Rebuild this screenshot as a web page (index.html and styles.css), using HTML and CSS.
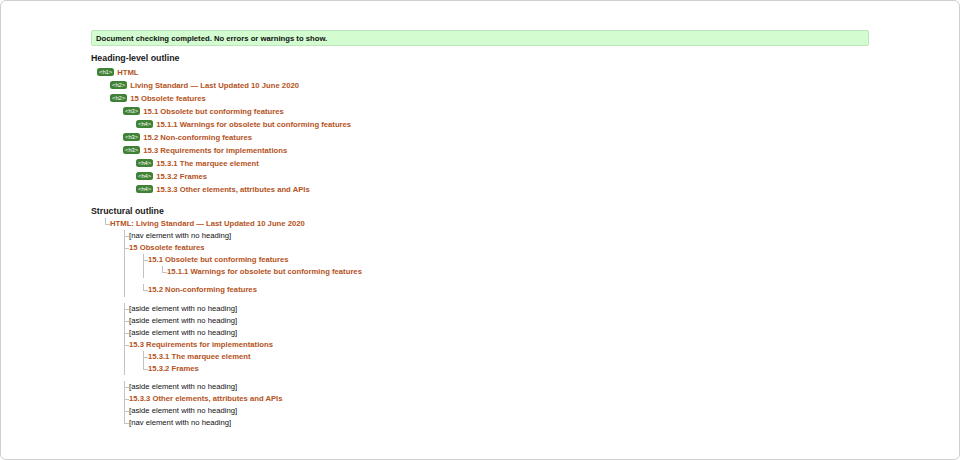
FILE: index.html
```html
<!DOCTYPE html>
<html lang="en">
<head>
    <meta charset="UTF-8">
    <meta name="viewport" content="width=device-width, initial-scale=1.0">
    <title>Nu Html Checker - Outline</title>
    <link rel="stylesheet" href="styles.css">
</head>
<body>
    <div class="frame">
        <div class="content">
            <p class="success">Document checking completed. No errors or warnings to show.</p>

            <section class="outline">
                <h2>Heading-level outline</h2>
                <ol class="headings">
                    <li class="lvl1"><span class="tag">&lt;h1&gt;</span><span class="title">HTML</span></li>
                    <li class="lvl2"><span class="tag">&lt;h2&gt;</span><span class="title">Living Standard — Last Updated 10 June 2020</span></li>
                    <li class="lvl2"><span class="tag">&lt;h2&gt;</span><span class="title">15 Obsolete features</span></li>
                    <li class="lvl3"><span class="tag">&lt;h3&gt;</span><span class="title">15.1 Obsolete but conforming features</span></li>
                    <li class="lvl4"><span class="tag">&lt;h4&gt;</span><span class="title">15.1.1 Warnings for obsolete but conforming features</span></li>
                    <li class="lvl3"><span class="tag">&lt;h3&gt;</span><span class="title">15.2 Non-conforming features</span></li>
                    <li class="lvl3"><span class="tag">&lt;h3&gt;</span><span class="title">15.3 Requirements for implementations</span></li>
                    <li class="lvl4"><span class="tag">&lt;h4&gt;</span><span class="title">15.3.1 The marquee element</span></li>
                    <li class="lvl4"><span class="tag">&lt;h4&gt;</span><span class="title">15.3.2 Frames</span></li>
                    <li class="lvl4"><span class="tag">&lt;h4&gt;</span><span class="title">15.3.3 Other elements, attributes and APIs</span></li>
                </ol>
            </section>

            <section class="outline">
                <h2>Structural outline</h2>
                <ol class="tree">
                    <li><span class="title">HTML: Living Standard — Last Updated 10 June 2020</span>
                        <ol>
                            <li><span class="empty">[nav element with no heading]</span></li>
                            <li><span class="title">15 Obsolete features</span>
                                <ol>
                                    <li><span class="title">15.1 Obsolete but conforming features</span>
                                        <ol>
                                            <li><span class="title">15.1.1 Warnings for obsolete but conforming features</span></li>
                                        </ol>
                                    </li>
                                    <li><span class="title">15.2 Non-conforming features</span></li>
                                </ol>
                            </li>
                            <li><span class="empty">[aside element with no heading]</span></li>
                            <li><span class="empty">[aside element with no heading]</span></li>
                            <li><span class="empty">[aside element with no heading]</span></li>
                            <li><span class="title">15.3 Requirements for implementations</span>
                                <ol>
                                    <li><span class="title">15.3.1 The marquee element</span></li>
                                    <li><span class="title">15.3.2 Frames</span></li>
                                </ol>
                            </li>
                            <li><span class="empty">[aside element with no heading]</span></li>
                            <li><span class="title">15.3.3 Other elements, attributes and APIs</span></li>
                            <li><span class="empty">[aside element with no heading]</span></li>
                            <li><span class="empty">[nav element with no heading]</span></li>
                        </ol>
                    </li>
                </ol>
            </section>
        </div>
    </div>
</body>
</html>
```

FILE: styles.css
```css
:root {
    --frame-border: #cfcfcf;
    --ok-bg: #d3fcd0;
    --ok-border: #bde6b9;
    --heading: #1a1a1a;
    --link: #b4531c;
    --tag-bg: #3f8235;
    --line: #c2c2c2;
}

* {
    margin: 0;
    padding: 0;
    box-sizing: border-box;
}

body {
    font-family: "Liberation Sans", Arial, sans-serif;
    background-color: #fff;
    color: #111;
}

.frame {
    height: 460px;
    border: 1px solid var(--frame-border);
    border-radius: 6px;
}

.content {
    max-width: 778px;
    margin: 0 auto;
    padding-top: 29px;
}

.success {
    background-color: var(--ok-bg);
    border: 1px solid var(--ok-border);
    border-radius: 2px;
    padding: 1px 4px 0;
    font-size: 7.7px;
    line-height: 13px;
    font-weight: 700;
    margin-bottom: 7px;
}

.outline h2 {
    font-size: 8.8px;
    line-height: 11px;
    font-weight: 700;
    color: var(--heading);
}

ol {
    list-style: none;
}

.title {
    color: var(--link);
    font-weight: 700;
}

.empty {
    color: #111;
}

/* heading-level outline */

.headings {
    margin: 2px 0 10px;
    font-size: 7.7px;
}

.headings li {
    line-height: 13px;
    height: 13px;
}

.headings .lvl1 { padding-left: 6px; }
.headings .lvl2 { padding-left: 19px; }
.headings .lvl3 { padding-left: 32px; }
.headings .lvl4 { padding-left: 45px; }

.tag {
    display: inline-block;
    vertical-align: middle;
    margin-top: -1px;
    margin-right: 3px;
    padding: 0 2px;
    height: 8px;
    line-height: 8px;
    font-size: 5.8px;
    color: #fff;
    background-color: var(--tag-bg);
    border-radius: 2.5px;
}

/* structural outline */

.tree {
    margin-top: 1px;
    padding-left: 14px;
    font-size: 7.7px;
    line-height: 12.1px;
}

.tree ol {
    padding-left: 14px;
    margin-bottom: 6px;
}

.tree li {
    position: relative;
    padding-left: 5px;
}

.tree li::before {
    content: '';
    position: absolute;
    left: 0;
    top: 0;
    width: 4px;
    height: 6px;
    border-left: 1px solid var(--line);
    border-bottom: 1px solid var(--line);
}

.tree li:not(:last-child)::after {
    content: '';
    position: absolute;
    left: 0;
    top: 0;
    bottom: 0;
    border-left: 1px solid var(--line);
}
```
